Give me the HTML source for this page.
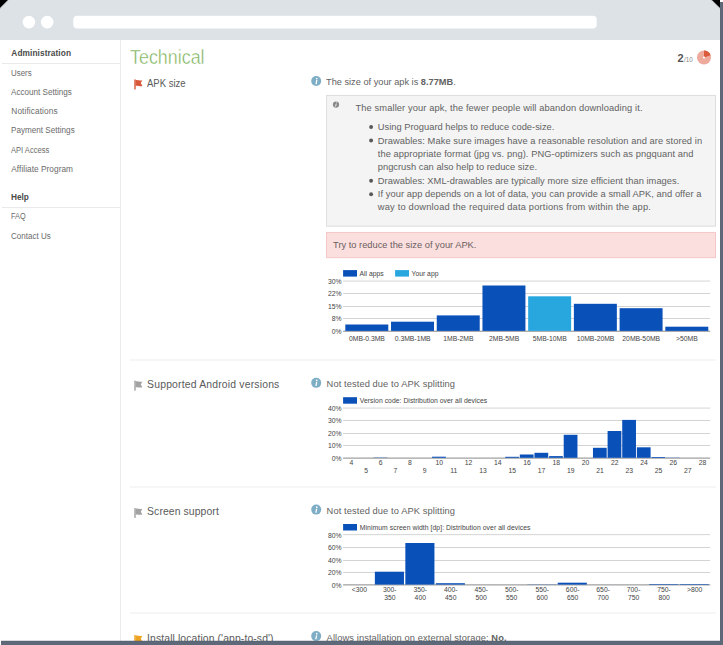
<!DOCTYPE html>
<html lang="en"><head><meta charset="utf-8"><title>Technical</title>
<style>
html,body{margin:0;padding:0;background:#fff;}
body{width:723px;height:645px;overflow:hidden;position:relative;font-family:"Liberation Sans", sans-serif;}
#bg{position:absolute;left:0;top:0;width:723px;height:645px;display:block;}
#clip{position:absolute;left:0;top:0;width:720px;height:641px;overflow:hidden;}
.t{position:absolute;white-space:nowrap;line-height:1;font-family:"Liberation Sans", sans-serif;}
.t b{font-weight:700;}
</style></head><body>
<svg id="bg" width="723" height="645" viewBox="0 0 723 645">
<rect x="0" y="0" width="723" height="645" fill="#ffffff"/>
<rect x="1" y="2" width="722" height="643" fill="#5d6979"/>
<rect x="0" y="2" width="1" height="643" fill="#fff"/>
<path d="M0 641 V8 A8 8 0 0 1 8 0 H712 A8 8 0 0 1 720 8 V641 Z" fill="#ffffff"/>
<path d="M0 40 V8 A8 8 0 0 1 8 0 H712 A8 8 0 0 1 720 8 V40 Z" fill="#dde2e7"/>
<circle cx="28.9" cy="22.1" r="6.3" fill="#fff"/>
<circle cx="47.2" cy="22.1" r="6.3" fill="#fff"/>
<rect x="73.3" y="15.8" width="523.4" height="12.8" rx="4" fill="#fff"/>
<rect x="120.22" y="40.00" width="0.75" height="601.00" fill="#e4e4e4" />
<rect x="2.00" y="63.08" width="118.60" height="0.75" fill="#e2e2e2" />
<rect x="2.00" y="207.22" width="118.60" height="0.75" fill="#e2e2e2" />
<rect x="130.00" y="359.50" width="586.00" height="1.00" fill="#ededed" />
<rect x="130.00" y="486.50" width="586.00" height="1.00" fill="#ededed" />
<rect x="130.00" y="612.50" width="586.00" height="1.00" fill="#ededed" />
<rect x="326.6" y="95.4" width="388.9" height="130.8" fill="#f4f4f4" stroke="#dbdbdb" stroke-width="0.9"/>
<rect x="326.6" y="232.4" width="388.9" height="25.3" fill="#fbdfdf" stroke="#f4c3c5" stroke-width="0.9"/>
<circle cx="371.1" cy="127.0" r="1.95" fill="#585858"/>
<circle cx="371.1" cy="140.5" r="1.95" fill="#585858"/>
<circle cx="371.1" cy="180.7" r="1.95" fill="#585858"/>
<circle cx="371.1" cy="194.2" r="1.95" fill="#585858"/>
<g transform="translate(134.3,79.3)" fill="#d9583a"><rect x="0" y="0" width="1.4" height="10.2" rx="0.6"/><path d="M1.2 0.8 C3.2 0.2 5.2 1.6 8.1 0.9 L6.5 3.8 L8.1 6.6 C5.2 7.4 3.2 6.0 1.2 6.8 Z"/></g>
<g transform="translate(134.3,380.6)" fill="#a3a3a3"><rect x="0" y="0" width="1.4" height="10.2" rx="0.6"/><path d="M1.2 0.8 C3.2 0.2 5.2 1.6 8.1 0.9 L6.5 3.8 L8.1 6.6 C5.2 7.4 3.2 6.0 1.2 6.8 Z"/></g>
<g transform="translate(134.3,507.9)" fill="#a3a3a3"><rect x="0" y="0" width="1.4" height="10.2" rx="0.6"/><path d="M1.2 0.8 C3.2 0.2 5.2 1.6 8.1 0.9 L6.5 3.8 L8.1 6.6 C5.2 7.4 3.2 6.0 1.2 6.8 Z"/></g>
<g transform="translate(134.3,634.9)" fill="#eda31f"><rect x="0" y="0" width="1.4" height="10.2" rx="0.6"/><path d="M1.2 0.8 C3.2 0.2 5.2 1.6 8.1 0.9 L6.5 3.8 L8.1 6.6 C5.2 7.4 3.2 6.0 1.2 6.8 Z"/></g>
<circle cx="316.2" cy="81.0" r="5.0" fill="#7eadc6"/>
<rect x="316.00" y="80.10" width="1.3" height="4.1" fill="#fff" transform="skewX(-10) translate(14.26,0)"/>
<circle cx="316.75" cy="78.60" r="0.85" fill="#fff"/>
<circle cx="316.2" cy="382.84999999999997" r="5.0" fill="#7eadc6"/>
<rect x="316.00" y="381.95" width="1.3" height="4.1" fill="#fff" transform="skewX(-10) translate(67.38,0)"/>
<circle cx="316.75" cy="380.45" r="0.85" fill="#fff"/>
<circle cx="316.2" cy="509.59999999999997" r="5.0" fill="#7eadc6"/>
<rect x="316.00" y="508.70" width="1.3" height="4.1" fill="#fff" transform="skewX(-10) translate(89.69,0)"/>
<circle cx="316.75" cy="507.20" r="0.85" fill="#fff"/>
<circle cx="316.2" cy="636.1" r="5.0" fill="#7eadc6"/>
<rect x="316.00" y="635.20" width="1.3" height="4.1" fill="#fff" transform="skewX(-10) translate(111.95,0)"/>
<circle cx="316.75" cy="633.70" r="0.85" fill="#fff"/>
<circle cx="336.0" cy="104.6" r="3.15" fill="#8a8a8a"/>
<path d="M336.2 103.9 L335.5 106.6" stroke="#f4f4f4" stroke-width="0.9" fill="none"/>
<circle cx="336.45" cy="102.85" r="0.5" fill="#f4f4f4"/>
<circle cx="704" cy="57.5" r="7" fill="#eeaa9c"/>
<path d="M704 57.5 L704 50.5 A7 7 0 0 1 710.66 55.34 Z" fill="#dc5a3c"/>
<circle cx="704" cy="57.5" r="1.1" fill="#fff"/>
<rect x="343.10" y="280.70" width="367.10" height="0.70" fill="#c2c2c2" />
<rect x="343.10" y="293.05" width="367.10" height="0.70" fill="#c2c2c2" />
<rect x="343.10" y="306.10" width="367.10" height="0.70" fill="#c2c2c2" />
<rect x="343.10" y="318.20" width="367.10" height="0.70" fill="#c2c2c2" />
<rect x="343.10" y="330.72" width="367.10" height="0.95" fill="#848484" />
<rect x="345.32" y="324.50" width="42.97" height="6.40" fill="#0a50b9" />
<rect x="391.03" y="321.70" width="42.97" height="9.20" fill="#0a50b9" />
<rect x="436.75" y="315.40" width="42.97" height="15.50" fill="#0a50b9" />
<rect x="482.46" y="285.50" width="42.97" height="45.40" fill="#0a50b9" />
<rect x="528.17" y="296.30" width="42.97" height="34.60" fill="#28a7df" />
<rect x="573.88" y="303.80" width="42.97" height="27.10" fill="#0a50b9" />
<rect x="619.60" y="308.20" width="42.97" height="22.70" fill="#0a50b9" />
<rect x="665.31" y="326.70" width="42.97" height="4.20" fill="#0a50b9" />
<rect x="343.10" y="270.10" width="13.90" height="6.50" fill="#0a50b9" />
<rect x="395.10" y="270.10" width="13.90" height="6.50" fill="#28a7df" />
<rect x="343.10" y="407.70" width="367.10" height="0.70" fill="#c2c2c2" />
<rect x="343.10" y="420.05" width="367.10" height="0.70" fill="#c2c2c2" />
<rect x="343.10" y="433.05" width="367.10" height="0.70" fill="#c2c2c2" />
<rect x="343.10" y="445.05" width="367.10" height="0.70" fill="#c2c2c2" />
<rect x="343.10" y="457.62" width="367.10" height="0.95" fill="#848484" />
<rect x="373.54" y="457.50" width="13.75" height="0.30" fill="#0a50b9" />
<rect x="432.06" y="456.70" width="13.75" height="1.10" fill="#0a50b9" />
<rect x="505.20" y="456.80" width="13.75" height="1.00" fill="#0a50b9" />
<rect x="519.82" y="454.50" width="13.75" height="3.30" fill="#0a50b9" />
<rect x="534.45" y="452.80" width="13.75" height="5.00" fill="#0a50b9" />
<rect x="549.08" y="456.10" width="13.75" height="1.70" fill="#0a50b9" />
<rect x="563.71" y="434.80" width="13.75" height="23.00" fill="#0a50b9" />
<rect x="592.96" y="447.80" width="13.75" height="10.00" fill="#0a50b9" />
<rect x="607.59" y="431.00" width="13.75" height="26.80" fill="#0a50b9" />
<rect x="622.22" y="419.90" width="13.75" height="37.90" fill="#0a50b9" />
<rect x="636.85" y="447.30" width="13.75" height="10.50" fill="#0a50b9" />
<rect x="651.48" y="457.00" width="13.75" height="0.80" fill="#0a50b9" />
<rect x="666.10" y="457.65" width="13.75" height="0.20" fill="#0a50b9" />
<rect x="343.10" y="397.20" width="13.90" height="6.50" fill="#0a50b9" />
<rect x="343.10" y="534.40" width="367.10" height="0.70" fill="#c2c2c2" />
<rect x="343.10" y="547.05" width="367.10" height="0.70" fill="#c2c2c2" />
<rect x="343.10" y="560.10" width="367.10" height="0.70" fill="#c2c2c2" />
<rect x="343.10" y="572.10" width="367.10" height="0.70" fill="#c2c2c2" />
<rect x="343.10" y="584.42" width="367.10" height="0.95" fill="#848484" />
<rect x="374.86" y="571.70" width="29.10" height="12.90" fill="#0a50b9" />
<rect x="405.34" y="543.00" width="29.10" height="41.60" fill="#0a50b9" />
<rect x="435.81" y="583.20" width="29.10" height="1.40" fill="#0a50b9" />
<rect x="527.24" y="584.45" width="29.10" height="0.20" fill="#0a50b9" />
<rect x="557.71" y="582.70" width="29.10" height="1.90" fill="#0a50b9" />
<rect x="649.14" y="584.00" width="29.10" height="0.60" fill="#0a50b9" />
<rect x="679.61" y="584.00" width="29.10" height="0.60" fill="#0a50b9" />
<rect x="343.10" y="524.00" width="13.90" height="6.50" fill="#0a50b9" />
<rect x="1" y="641" width="722" height="4" fill="#5d6979"/>
<rect x="1" y="640.6" width="719" height="0.8" fill="#4f5a6b" opacity="0.55"/>
<path d="M0 0 H8.4 L0 8.4 Z" fill="#000"/>
<path d="M8.4 0 L0 8.4" stroke="#f2f4f6" stroke-width="0.7" fill="none"/>
<path d="M711.4 0 H720 V8.4 Z" fill="#000"/>
<path d="M711.4 0 L720 8.4" stroke="#f2f4f6" stroke-width="0.7" fill="none"/>
<rect x="720" y="0" width="3" height="2" fill="#fff"/>
</svg>
<div id="clip">
<span class="t" style="left:11.30px;top:49.10px;font-size:8.3px;color:#4a4a4a;font-weight:700;letter-spacing:0.089px;">Administration</span>
<span class="t" style="left:11.30px;top:69.10px;font-size:8.3px;color:#6b6b6b;font-weight:400;transform:scaleX(0.9505);transform-origin:0 0;">Users</span>
<span class="t" style="left:11.30px;top:88.10px;font-size:8.3px;color:#6b6b6b;font-weight:400;transform:scaleX(0.9781);transform-origin:0 0;">Account Settings</span>
<span class="t" style="left:11.30px;top:107.10px;font-size:8.3px;color:#6b6b6b;font-weight:400;letter-spacing:0.091px;">Notifications</span>
<span class="t" style="left:11.30px;top:126.10px;font-size:8.3px;color:#6b6b6b;font-weight:400;transform:scaleX(0.9795);transform-origin:0 0;">Payment Settings</span>
<span class="t" style="left:11.30px;top:146.10px;font-size:8.3px;color:#6b6b6b;font-weight:400;transform:scaleX(0.9102);transform-origin:0 0;">API Access</span>
<span class="t" style="left:11.30px;top:165.10px;font-size:8.3px;color:#6b6b6b;font-weight:400;letter-spacing:0.032px;">Affiliate Program</span>
<span class="t" style="left:11.30px;top:193.10px;font-size:8.3px;color:#4a4a4a;font-weight:700;transform:scaleX(0.9953);transform-origin:0 0;">Help</span>
<span class="t" style="left:11.30px;top:212.10px;font-size:8.3px;color:#6b6b6b;font-weight:400;transform:scaleX(0.8850);transform-origin:0 0;">FAQ</span>
<span class="t" style="left:11.30px;top:232.10px;font-size:8.3px;color:#6b6b6b;font-weight:400;transform:scaleX(0.9672);transform-origin:0 0;">Contact Us</span>
<span class="t" style="left:129.90px;top:48.10px;font-size:19.7px;color:#76af54;font-weight:400;transform:scaleX(0.9089);transform-origin:0 0;-webkit-text-stroke:0.45px #fff;">Technical</span>
<span class="t" style="left:147.10px;top:79.10px;font-size:10.4px;color:#5a5a5a;font-weight:400;transform:scaleX(0.9156);transform-origin:0 0;">APK size</span>
<span class="t" style="left:147.10px;top:380.10px;font-size:10.4px;color:#5a5a5a;font-weight:400;letter-spacing:0.182px;">Supported Android versions</span>
<span class="t" style="left:147.10px;top:507.10px;font-size:10.4px;color:#5a5a5a;font-weight:400;letter-spacing:0.095px;">Screen support</span>
<span class="t" style="left:147.10px;top:634.10px;font-size:10.4px;color:#5a5a5a;font-weight:400;letter-spacing:0.102px;">Install location ('app-to-sd')</span>
<span class="t" style="left:326.40px;top:78.10px;font-size:9.3px;color:#626262;font-weight:400;transform:scaleX(0.9920);transform-origin:0 0;">The size of your apk is <b>8.77MB</b>.</span>
<span class="t" style="left:326.60px;top:380.10px;font-size:9.3px;color:#626262;font-weight:400;letter-spacing:0.094px;">Not tested due to APK splitting</span>
<span class="t" style="left:326.60px;top:507.10px;font-size:9.3px;color:#626262;font-weight:400;letter-spacing:0.094px;">Not tested due to APK splitting</span>
<span class="t" style="left:326.60px;top:634.10px;font-size:9.3px;color:#626262;font-weight:400;letter-spacing:0.098px;">Allows installation on external storage: <b>No.</b></span>
<span class="t" style="left:355.50px;top:104.10px;font-size:9.3px;color:#626262;font-weight:400;letter-spacing:0.112px;">The smaller your apk, the fewer people will abandon downloading it.</span>
<span class="t" style="left:377.80px;top:123.10px;font-size:9.3px;color:#626262;font-weight:400;letter-spacing:0.022px;">Using Proguard helps to reduce code-size.</span>
<span class="t" style="left:377.80px;top:137.10px;font-size:9.3px;color:#626262;font-weight:400;letter-spacing:0.067px;">Drawables: Make sure images have a reasonable resolution and are stored in</span>
<span class="t" style="left:377.80px;top:150.10px;font-size:9.3px;color:#626262;font-weight:400;letter-spacing:0.078px;">the appropriate format (jpg vs. png). PNG-optimizers such as pngquant and</span>
<span class="t" style="left:377.80px;top:163.10px;font-size:9.3px;color:#626262;font-weight:400;letter-spacing:0.014px;">pngcrush can also help to reduce size.</span>
<span class="t" style="left:377.80px;top:177.10px;font-size:9.3px;color:#626262;font-weight:400;letter-spacing:0.043px;">Drawables: XML-drawables are typically more size efficient than images.</span>
<span class="t" style="left:377.80px;top:190.10px;font-size:9.3px;color:#626262;font-weight:400;letter-spacing:0.057px;">If your app depends on a lot of data, you can provide a small APK, and offer a</span>
<span class="t" style="left:377.80px;top:203.10px;font-size:9.3px;color:#626262;font-weight:400;letter-spacing:0.187px;">way to download the required data portions from within the app.</span>
<span class="t" style="left:333.10px;top:241.10px;font-size:9.3px;color:#6a6060;font-weight:400;letter-spacing:-0.000px;">Try to reduce the size of your APK.</span>
<span class="t" style="left:677.60px;top:53.10px;font-size:11px;color:#555;font-weight:700;">2</span>
<span class="t" style="left:684.00px;top:57.10px;font-size:6.3px;color:#888;font-weight:400;letter-spacing:0.017px;">/10</span>
<span class="t" style="left:359.50px;top:271.10px;font-size:6.8px;color:#444;font-weight:400;">All apps</span>
<span class="t" style="left:411.50px;top:271.10px;font-size:6.8px;color:#444;font-weight:400;">Your app</span>
<span class="t" style="left:327.99px;top:279.10px;font-size:6.8px;color:#444;font-weight:400;">30%</span>
<span class="t" style="left:327.99px;top:291.10px;font-size:6.8px;color:#444;font-weight:400;">22%</span>
<span class="t" style="left:327.99px;top:304.10px;font-size:6.8px;color:#444;font-weight:400;">15%</span>
<span class="t" style="left:331.77px;top:316.10px;font-size:6.8px;color:#444;font-weight:400;">8%</span>
<span class="t" style="left:331.77px;top:329.10px;font-size:6.8px;color:#444;font-weight:400;">0%</span>
<span class="t" style="left:349.01px;top:336.10px;font-size:6.8px;color:#444;font-weight:400;">0MB-0.3MB</span>
<span class="t" style="left:394.72px;top:336.10px;font-size:6.8px;color:#444;font-weight:400;">0.3MB-1MB</span>
<span class="t" style="left:443.27px;top:336.10px;font-size:6.8px;color:#444;font-weight:400;">1MB-2MB</span>
<span class="t" style="left:488.98px;top:336.10px;font-size:6.8px;color:#444;font-weight:400;">2MB-5MB</span>
<span class="t" style="left:532.81px;top:336.10px;font-size:6.8px;color:#444;font-weight:400;">5MB-10MB</span>
<span class="t" style="left:576.63px;top:336.10px;font-size:6.8px;color:#444;font-weight:400;">10MB-20MB</span>
<span class="t" style="left:622.34px;top:336.10px;font-size:6.8px;color:#444;font-weight:400;">20MB-50MB</span>
<span class="t" style="left:676.08px;top:336.10px;font-size:6.8px;color:#444;font-weight:400;">&gt;50MB</span>
<span class="t" style="left:359.80px;top:398.10px;font-size:6.8px;color:#444;font-weight:400;letter-spacing:0.038px;">Version code: Distribution over all devices</span>
<span class="t" style="left:327.99px;top:406.10px;font-size:6.8px;color:#444;font-weight:400;">40%</span>
<span class="t" style="left:327.99px;top:418.10px;font-size:6.8px;color:#444;font-weight:400;">30%</span>
<span class="t" style="left:327.99px;top:431.10px;font-size:6.8px;color:#444;font-weight:400;">20%</span>
<span class="t" style="left:327.99px;top:443.10px;font-size:6.8px;color:#444;font-weight:400;">10%</span>
<span class="t" style="left:331.77px;top:456.10px;font-size:6.8px;color:#444;font-weight:400;">0%</span>
<span class="t" style="left:349.52px;top:460.10px;font-size:6.8px;color:#444;font-weight:400;">4</span>
<span class="t" style="left:364.15px;top:468.10px;font-size:6.8px;color:#444;font-weight:400;">5</span>
<span class="t" style="left:378.78px;top:460.10px;font-size:6.8px;color:#444;font-weight:400;">6</span>
<span class="t" style="left:393.41px;top:468.10px;font-size:6.8px;color:#444;font-weight:400;">7</span>
<span class="t" style="left:408.04px;top:460.10px;font-size:6.8px;color:#444;font-weight:400;">8</span>
<span class="t" style="left:422.66px;top:468.10px;font-size:6.8px;color:#444;font-weight:400;">9</span>
<span class="t" style="left:435.40px;top:460.10px;font-size:6.8px;color:#444;font-weight:400;">10</span>
<span class="t" style="left:450.28px;top:468.10px;font-size:6.8px;color:#444;font-weight:400;">11</span>
<span class="t" style="left:464.66px;top:460.10px;font-size:6.8px;color:#444;font-weight:400;">12</span>
<span class="t" style="left:479.28px;top:468.10px;font-size:6.8px;color:#444;font-weight:400;">13</span>
<span class="t" style="left:493.91px;top:460.10px;font-size:6.8px;color:#444;font-weight:400;">14</span>
<span class="t" style="left:508.54px;top:468.10px;font-size:6.8px;color:#444;font-weight:400;">15</span>
<span class="t" style="left:523.17px;top:460.10px;font-size:6.8px;color:#444;font-weight:400;">16</span>
<span class="t" style="left:537.80px;top:468.10px;font-size:6.8px;color:#444;font-weight:400;">17</span>
<span class="t" style="left:552.42px;top:460.10px;font-size:6.8px;color:#444;font-weight:400;">18</span>
<span class="t" style="left:567.05px;top:468.10px;font-size:6.8px;color:#444;font-weight:400;">19</span>
<span class="t" style="left:581.68px;top:460.10px;font-size:6.8px;color:#444;font-weight:400;">20</span>
<span class="t" style="left:596.31px;top:468.10px;font-size:6.8px;color:#444;font-weight:400;">21</span>
<span class="t" style="left:610.94px;top:460.10px;font-size:6.8px;color:#444;font-weight:400;">22</span>
<span class="t" style="left:625.56px;top:468.10px;font-size:6.8px;color:#444;font-weight:400;">23</span>
<span class="t" style="left:640.19px;top:460.10px;font-size:6.8px;color:#444;font-weight:400;">24</span>
<span class="t" style="left:654.82px;top:468.10px;font-size:6.8px;color:#444;font-weight:400;">25</span>
<span class="t" style="left:669.45px;top:460.10px;font-size:6.8px;color:#444;font-weight:400;">26</span>
<span class="t" style="left:684.08px;top:468.10px;font-size:6.8px;color:#444;font-weight:400;">27</span>
<span class="t" style="left:698.70px;top:460.10px;font-size:6.8px;color:#444;font-weight:400;">28</span>
<span class="t" style="left:359.80px;top:525.10px;font-size:6.8px;color:#444;font-weight:400;letter-spacing:0.061px;">Minimum screen width [dp]: Distribution over all devices</span>
<span class="t" style="left:327.99px;top:533.10px;font-size:6.8px;color:#444;font-weight:400;">80%</span>
<span class="t" style="left:327.99px;top:545.10px;font-size:6.8px;color:#444;font-weight:400;">60%</span>
<span class="t" style="left:327.99px;top:558.10px;font-size:6.8px;color:#444;font-weight:400;">40%</span>
<span class="t" style="left:327.99px;top:570.10px;font-size:6.8px;color:#444;font-weight:400;">20%</span>
<span class="t" style="left:331.77px;top:583.10px;font-size:6.8px;color:#444;font-weight:400;">0%</span>
<span class="t" style="left:351.68px;top:587.10px;font-size:6.8px;color:#444;font-weight:400;">&lt;300</span>
<span class="t" style="left:383.01px;top:587.10px;font-size:6.8px;color:#444;font-weight:400;">300-</span>
<span class="t" style="left:384.14px;top:595.10px;font-size:6.8px;color:#444;font-weight:400;">350</span>
<span class="t" style="left:413.48px;top:587.10px;font-size:6.8px;color:#444;font-weight:400;">350-</span>
<span class="t" style="left:414.62px;top:595.10px;font-size:6.8px;color:#444;font-weight:400;">400</span>
<span class="t" style="left:443.96px;top:587.10px;font-size:6.8px;color:#444;font-weight:400;">400-</span>
<span class="t" style="left:445.09px;top:595.10px;font-size:6.8px;color:#444;font-weight:400;">450</span>
<span class="t" style="left:474.43px;top:587.10px;font-size:6.8px;color:#444;font-weight:400;">450-</span>
<span class="t" style="left:475.57px;top:595.10px;font-size:6.8px;color:#444;font-weight:400;">500</span>
<span class="t" style="left:504.91px;top:587.10px;font-size:6.8px;color:#444;font-weight:400;">500-</span>
<span class="t" style="left:506.04px;top:595.10px;font-size:6.8px;color:#444;font-weight:400;">550</span>
<span class="t" style="left:535.38px;top:587.10px;font-size:6.8px;color:#444;font-weight:400;">550-</span>
<span class="t" style="left:536.52px;top:595.10px;font-size:6.8px;color:#444;font-weight:400;">600</span>
<span class="t" style="left:565.86px;top:587.10px;font-size:6.8px;color:#444;font-weight:400;">600-</span>
<span class="t" style="left:566.99px;top:595.10px;font-size:6.8px;color:#444;font-weight:400;">650</span>
<span class="t" style="left:596.33px;top:587.10px;font-size:6.8px;color:#444;font-weight:400;">650-</span>
<span class="t" style="left:597.47px;top:595.10px;font-size:6.8px;color:#444;font-weight:400;">700</span>
<span class="t" style="left:626.81px;top:587.10px;font-size:6.8px;color:#444;font-weight:400;">700-</span>
<span class="t" style="left:627.94px;top:595.10px;font-size:6.8px;color:#444;font-weight:400;">750</span>
<span class="t" style="left:657.28px;top:587.10px;font-size:6.8px;color:#444;font-weight:400;">750-</span>
<span class="t" style="left:658.42px;top:595.10px;font-size:6.8px;color:#444;font-weight:400;">800</span>
<span class="t" style="left:686.91px;top:587.10px;font-size:6.8px;color:#444;font-weight:400;">&gt;800</span>
</div>
</body></html>
